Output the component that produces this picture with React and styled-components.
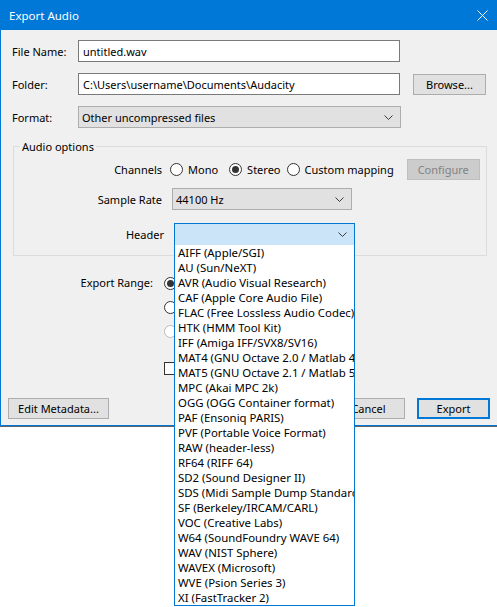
import React from 'react';
import styled, { createGlobalStyle } from 'styled-components';

const GlobalStyle = createGlobalStyle`
  html, body { margin: 0; padding: 0; background: #ffffff; }
  body {
    width: 497px; height: 607px; overflow: hidden;
    font-family: "Noto Sans", sans-serif; font-size: 11px; color: #000;
  }
  * { box-sizing: border-box; }
`;

const Window = styled.div`
  width: 498px;
  background: #f0f0f0;
  border: 1px solid #0078d7;
  border-top: none;
  box-shadow: 0 1px 0 #62626c;
  display: flex;
  flex-direction: column;
`;

const TitleBar = styled.div`
  height: 30px;
  background: #0078d7;
  color: #fff;
  display: flex;
  align-items: center;
  justify-content: space-between;
  padding: 0 10px 0 9px;
  font-size: 11.5px;
  margin: 0 -1px;
`;

const Body = styled.div`
  display: flex;
  flex-direction: column;
  padding: 10px 7px 6px 0;
`;

const FormRow = styled.div`
  display: flex;
  align-items: center;
  height: 22px;
  padding-left: 11px;
  margin-top: ${p => p.$mt || 0}px;
`;

const FormLabel = styled.label`
  width: 66px;
  flex: none;
`;

const TextInput = styled.div`
  width: 322px;
  height: 22px;
  background: #fff;
  border: 1px solid #7a7a7a;
  padding-left: 4px;
  display: flex;
  align-items: center;
  white-space: nowrap;
`;

const Button = styled.button`
  font: inherit;
  color: ${p => (p.$disabled ? '#838383' : '#000')};
  width: ${p => p.$w}px;
  height: ${p => p.$h || 21}px;
  background: ${p => (p.$disabled ? '#cccccc' : '#e1e1e1')};
  border: ${p => (p.$default ? '2px solid #0078d7' : p.$disabled ? '1px solid #bfbfbf' : '1px solid #adadad')};
  padding: 0;
  margin-left: ${p => p.$ml || 0}px;
  flex: none;
  display: flex;
  align-items: center;
  justify-content: center;
`;

const Select = styled.div`
  position: relative;
  width: ${p => p.$w}px;
  height: ${p => p.$h || 22}px;
  background: ${p => (p.$focus ? '#cce4f7' : '#e1e1e1')};
  border: 1px solid ${p => (p.$focus ? '#0078d7' : '#adadad')};
  margin-left: ${p => p.$ml || 0}px;
  display: flex;
  align-items: center;
  justify-content: space-between;
  padding: 0 7px 0 3px;
  flex: none;
`;

const Chevron = () => (
  <svg width="9" height="5" viewBox="0 0 9 5">
    <path d="M0.5 0.5 L4.5 4.5 L8.5 0.5" fill="none" stroke="#3a3a3a" strokeWidth="1" />
  </svg>
);

const Group = styled.fieldset`
  margin: 11px 10px 0 12px;
  padding: 5px 0 9px 0;
  border: 1px solid #dcdcdc;
  width: 474px;
  min-width: 0;
`;

const Legend = styled.legend`
  margin-left: 6px;
  padding: 0 2px;
  line-height: 15px;
`;

const GroupRow = styled.div`
  display: flex;
  align-items: center;
  height: ${p => p.$h}px;
  margin-top: ${p => p.$mt || 0}px;
  padding-left: ${p => p.$shift || 0}px;
`;

const RowLabel = styled.span`
  width: ${p => p.$w}px;
  flex: none;
  text-align: right;
  margin-right: ${p => p.$gap}px;
`;

const RadioItem = styled.span`
  display: flex;
  align-items: center;
  gap: 5px;
  margin-right: ${p => p.$mr || 0}px;
  color: ${p => (p.$disabled ? '#838383' : '#000')};
  white-space: nowrap;
`;

const RadioCircle = styled.span`
  width: 13px;
  height: 13px;
  border-radius: 50%;
  border: 1px solid ${p => (p.$disabled ? '#bcbcbc' : '#333')};
  background: #fff;
  flex: none;
  display: flex;
  align-items: center;
  justify-content: center;
  &::after {
    content: '';
    width: 7px;
    height: 7px;
    border-radius: 50%;
    background: #333;
    display: ${p => (p.$checked ? 'block' : 'none')};
  }
`;

const CheckBox = styled.span`
  width: 13px;
  height: 13px;
  border: 1px solid #333;
  background: #fff;
  flex: none;
`;

const Radio = ({ checked, disabled, children, mr }) => (
  <RadioItem $disabled={disabled} $mr={mr}>
    <RadioCircle $checked={checked} $disabled={disabled} />
    {children}
  </RadioItem>
);

const RangeSection = styled.div`
  display: flex;
  align-items: flex-start;
  margin-top: 17px;
`;

const RangeLabel = styled.span`
  width: 152px;
  text-align: right;
  line-height: 20px;
  margin-right: 11px;
  flex: none;
`;

const RangeOptions = styled.div`
  display: flex;
  flex-direction: column;
`;

const OptionRow = styled.div`
  height: 20px;
  display: flex;
  align-items: center;
  margin-top: ${p => p.$mt || 0}px;
`;

const ButtonBar = styled.div`
  display: flex;
  justify-content: space-between;
  align-items: center;
  margin-top: 20px;
  padding-left: 7px;
`;

const ButtonGroup = styled.div`
  display: flex;
  gap: 12px;
`;

const DropList = styled.div`
  position: absolute;
  left: -1px;
  top: 100%;
  width: 181px;
  background: #fff;
  border: 1px solid #0078d7;
  border-top: none;
  overflow: hidden;
  z-index: 10;
  font-size: 11.4px;
`;

const DropItem = styled.div`
  height: 15px;
  line-height: 15px;
  padding-left: 3px;
  white-space: nowrap;
`;

const headers = [
  'AIFF (Apple/SGI)',
  'AU (Sun/NeXT)',
  'AVR (Audio Visual Research)',
  'CAF (Apple Core Audio File)',
  'FLAC (Free Lossless Audio Codec)',
  'HTK (HMM Tool Kit)',
  'IFF (Amiga IFF/SVX8/SV16)',
  'MAT4 (GNU Octave 2.0 / Matlab 4.2)',
  'MAT5 (GNU Octave 2.1 / Matlab 5.0)',
  'MPC (Akai MPC 2k)',
  'OGG (OGG Container format)',
  'PAF (Ensoniq PARIS)',
  'PVF (Portable Voice Format)',
  'RAW (header-less)',
  'RF64 (RIFF 64)',
  'SD2 (Sound Designer II)',
  'SDS (Midi Sample Dump Standard)',
  'SF (Berkeley/IRCAM/CARL)',
  'VOC (Creative Labs)',
  'W64 (SoundFoundry WAVE 64)',
  'WAV (NIST Sphere)',
  'WAVEX (Microsoft)',
  'WVE (Psion Series 3)',
  'XI (FastTracker 2)',
];

const CloseIcon = () => (
  <svg width="11" height="11" viewBox="0 0 11 11">
    <path d="M0.5 0.5 L10.5 10.5 M10.5 0.5 L0.5 10.5" stroke="#fff" strokeWidth="1" />
  </svg>
);

export default function App() {
  return (
    <>
      <GlobalStyle />
      <Window>
        <TitleBar>
          <span>Export Audio</span>
          <CloseIcon />
        </TitleBar>
        <Body>
          <FormRow>
            <FormLabel>File Name:</FormLabel>
            <TextInput>untitled.wav</TextInput>
          </FormRow>
          <FormRow $mt={11}>
            <FormLabel>Folder:</FormLabel>
            <TextInput>C:\Users\username\Documents\Audacity</TextInput>
            <Button $w={73} $ml={13}>Browse...</Button>
          </FormRow>
          <FormRow $mt={11}>
            <FormLabel>Format:</FormLabel>
            <Select $w={323}>
              <span>Other uncompressed files</span>
              <Chevron />
            </Select>
          </FormRow>

          <Group>
            <Legend>Audio options</Legend>
            <GroupRow $h={20}>
              <RowLabel $w={148} $gap={8}>Channels</RowLabel>
              <Radio mr={11}>Mono</Radio>
              <Radio checked mr={6}>Stereo</Radio>
              <Radio mr={13}>Custom mapping</Radio>
              <Button $w={73} $h={21} $disabled>Configure</Button>
            </GroupRow>
            <GroupRow $h={22} $mt={9}>
              <RowLabel $w={148} $gap={8}>Sample Rate</RowLabel>
              <Select $w={180} $ml={2}>
                <span>44100 Hz</span>
                <Chevron />
              </Select>
            </GroupRow>
            <GroupRow $h={23} $mt={13} $shift={2}>
              <RowLabel $w={148} $gap={8}>Header</RowLabel>
              <Select $w={181} $h={23} $ml={2} $focus>
                <span />
                <Chevron />
                <DropList>
                  {headers.map(h => (
                    <DropItem key={h}>{h}</DropItem>
                  ))}
                </DropList>
              </Select>
            </GroupRow>
          </Group>

          <RangeSection>
            <RangeLabel>Export Range:</RangeLabel>
            <RangeOptions>
              <OptionRow>
                <Radio checked />
              </OptionRow>
              <OptionRow $mt={4}>
                <Radio />
              </OptionRow>
              <OptionRow $mt={4}>
                <Radio disabled />
              </OptionRow>
              <OptionRow $mt={17}>
                <CheckBox />
              </OptionRow>
            </RangeOptions>
          </RangeSection>

          <ButtonBar>
            <Button $w={101}>Edit Metadata...</Button>
            <ButtonGroup>
              <Button $w={73}>Cancel</Button>
              <Button $w={73} $default>Export</Button>
            </ButtonGroup>
          </ButtonBar>
        </Body>
      </Window>
    </>
  );
}
